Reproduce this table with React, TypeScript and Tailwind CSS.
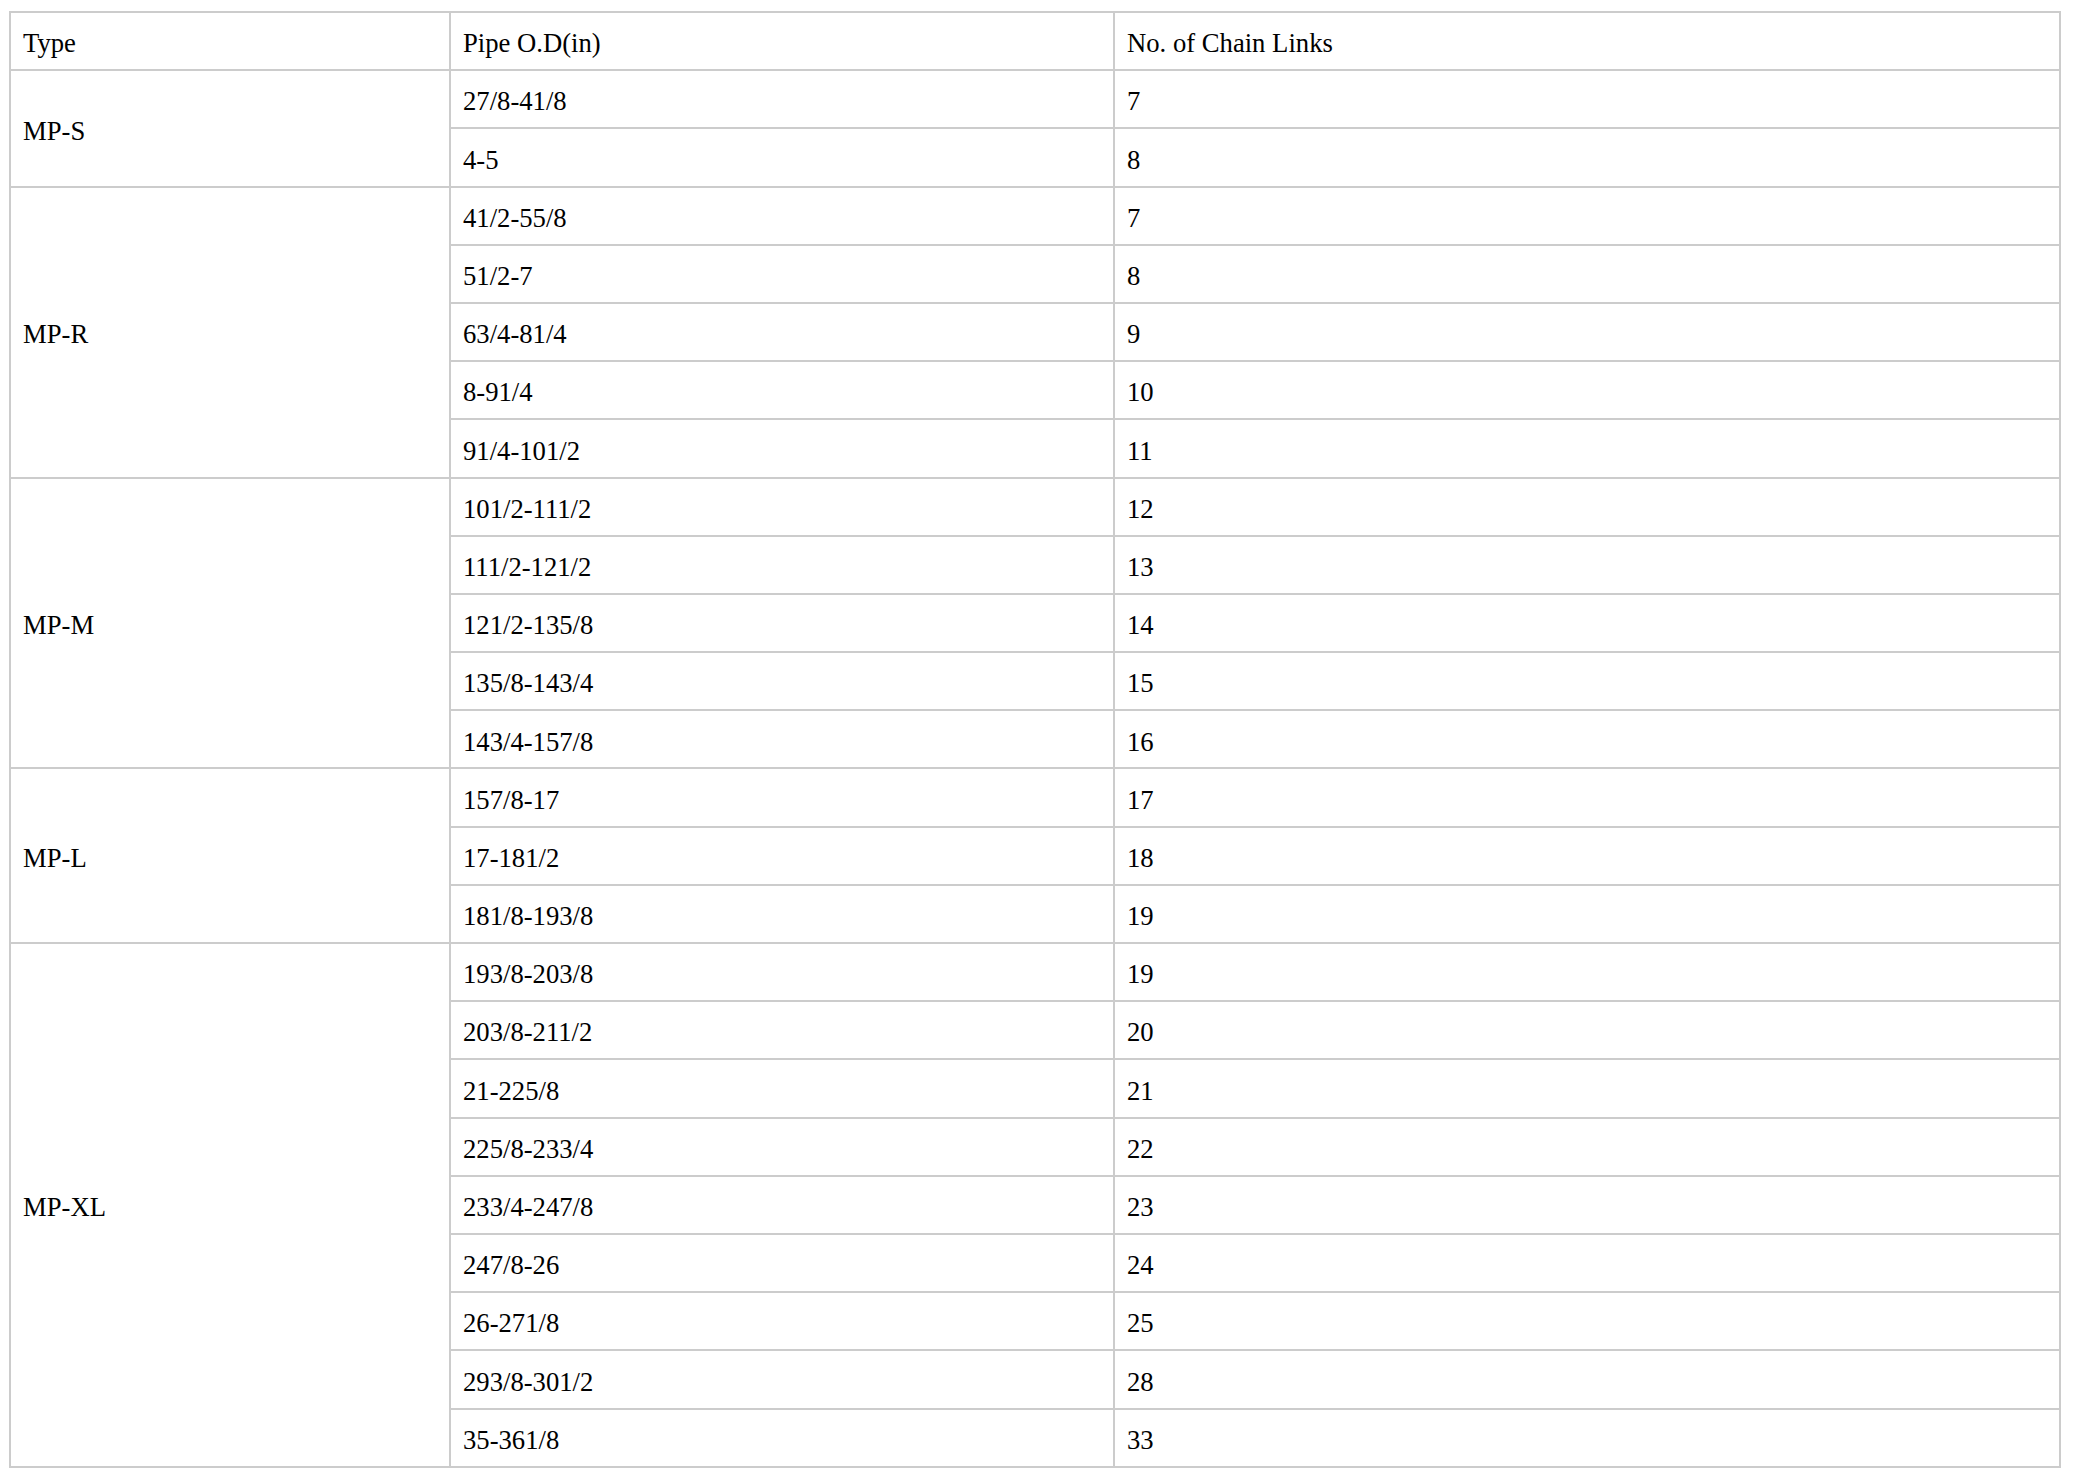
import React from "react";

type Group = { type: string; rows: [string, string][] };

const groups: Group[] = [
  { type: "MP-S", rows: [["27/8-41/8", "7"], ["4-5", "8"]] },
  {
    type: "MP-R",
    rows: [
      ["41/2-55/8", "7"],
      ["51/2-7", "8"],
      ["63/4-81/4", "9"],
      ["8-91/4", "10"],
      ["91/4-101/2", "11"],
    ],
  },
  {
    type: "MP-M",
    rows: [
      ["101/2-111/2", "12"],
      ["111/2-121/2", "13"],
      ["121/2-135/8", "14"],
      ["135/8-143/4", "15"],
      ["143/4-157/8", "16"],
    ],
  },
  {
    type: "MP-L",
    rows: [
      ["157/8-17", "17"],
      ["17-181/2", "18"],
      ["181/8-193/8", "19"],
    ],
  },
  {
    type: "MP-XL",
    rows: [
      ["193/8-203/8", "19"],
      ["203/8-211/2", "20"],
      ["21-225/8", "21"],
      ["225/8-233/4", "22"],
      ["233/4-247/8", "23"],
      ["247/8-26", "24"],
      ["26-271/8", "25"],
      ["293/8-301/2", "28"],
      ["35-361/8", "33"],
    ],
  },
];

const cell =
  "border-2 border-[#cccccc] pl-[12px] pr-[12px] pt-[5px] pb-0 align-middle text-left font-normal";

export default function App() {
  return (
    <div className="min-h-screen bg-white pl-[9px] pt-[11px]">
      <table
        className="table-fixed border-collapse w-[2050px] text-black text-[26.67px] leading-[1.15]"
        style={{ fontFamily: '"Liberation Serif", "Times New Roman", serif' }}
      >
        <colgroup>
          <col className="w-[440px]" />
          <col className="w-[664px]" />
          <col className="w-[946px]" />
        </colgroup>
        <tbody>
          <tr className="h-[58.2px]">
            <td className={cell}>Type</td>
            <td className={cell}>Pipe O.D(in)</td>
            <td className={cell}>No. of Chain Links</td>
          </tr>
          {groups.map((g) =>
            g.rows.map((r, i) => (
              <tr key={g.type + i} className="h-[58.2px]">
                {i === 0 && (
                  <td className={cell} rowSpan={g.rows.length}>
                    {g.type}
                  </td>
                )}
                <td className={cell}>{r[0]}</td>
                <td className={cell}>{r[1]}</td>
              </tr>
            ))
          )}
        </tbody>
      </table>
    </div>
  );
}
